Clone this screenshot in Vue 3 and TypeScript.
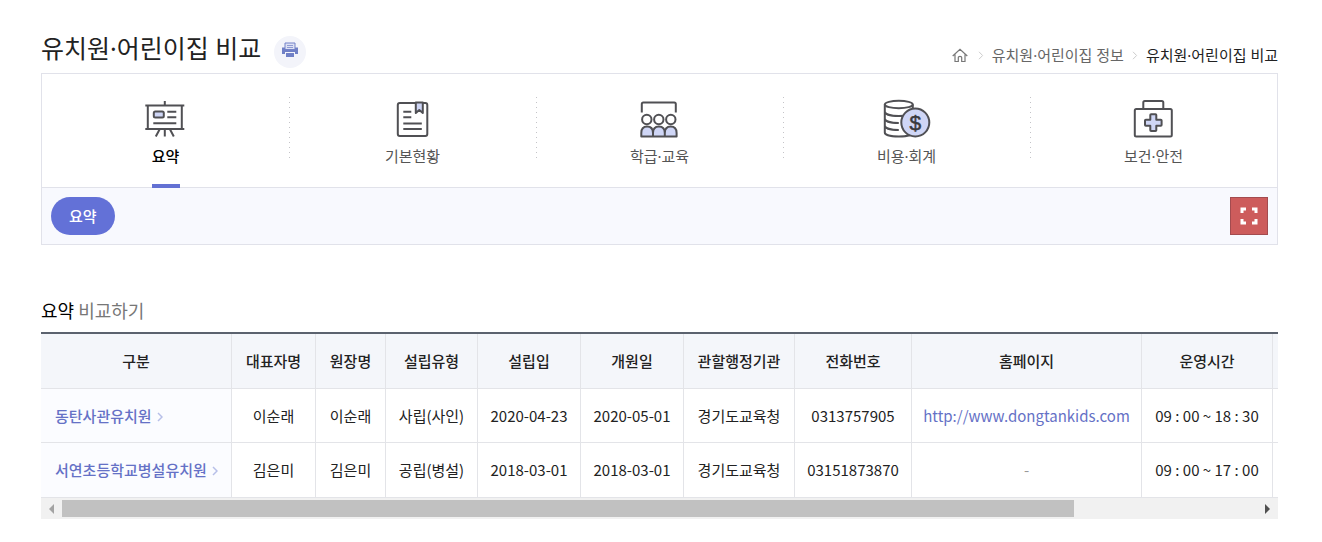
<script setup lang="ts">
import { computed, onBeforeUnmount, onMounted, ref } from 'vue'

type IconName = 'board' | 'note' | 'class' | 'cost' | 'health'

interface Tab {
  icon: IconName
  label: string
}

interface School {
  name: string
  owner: string
  director: string
  type: string
  founded: string
  opened: string
  office: string
  phone: string
  homepage: string
  hours: string
}

const tabs: Tab[] = [
  { icon: 'board', label: '요약' },
  { icon: 'note', label: '기본현황' },
  { icon: 'class', label: '학급·교육' },
  { icon: 'cost', label: '비용·회계' },
  { icon: 'health', label: '보건·안전' },
]

const columns = ['구분', '대표자명', '원장명', '설립유형', '설립입', '개원일', '관할행정기관', '전화번호', '홈페이지', '운영시간']

const schools: School[] = [
  {
    name: '동탄사관유치원', owner: '이순래', director: '이순래', type: '사립(사인)',
    founded: '2020-04-23', opened: '2020-05-01', office: '경기도교육청', phone: '0313757905',
    homepage: 'http://www.dongtankids.com', hours: '09 : 00 ~ 18 : 30',
  },
  {
    name: '서연초등학교병설유치원', owner: '김은미', director: '김은미', type: '공립(병설)',
    founded: '2018-03-01', opened: '2018-03-01', office: '경기도교육청', phone: '03151873870',
    homepage: '', hours: '09 : 00 ~ 17 : 00',
  },
]

const active = ref(0)
const scroller = ref<HTMLElement | null>(null)
const visible = ref(1)
const total = ref(1)
const offset = ref(0)

const thumbStyle = computed(() => ({
  width: `${(visible.value / total.value) * 100}%`,
  marginLeft: `${(offset.value / total.value) * 100}%`,
}))

function measure() {
  const el = scroller.value
  if (!el) return
  visible.value = el.clientWidth
  total.value = el.scrollWidth
  offset.value = el.scrollLeft
}

function scrollTable(step: number) {
  scroller.value?.scrollBy({ left: step })
}

function printPage() {
  window.print()
}

onMounted(() => {
  measure()
  window.addEventListener('resize', measure)
})
onBeforeUnmount(() => window.removeEventListener('resize', measure))
</script>

<template>
  <main class="page">
    <header class="head">
      <div class="head-title">
        <h1>유치원·어린이집 비교</h1>
        <button class="print" type="button" aria-label="인쇄" @click="printPage">
          <svg width="16" height="16" viewBox="0 0 16 16" aria-hidden="true">
            <path d="M0 5.500h16V12H0z" fill="#7080c6" />
            <path d="M3 1h10v6.500H3z" fill="#dde1f4" stroke="#7583c8" />
            <path d="M5 3.500h6M5 5.500h6" stroke="#8f9bd3" />
            <path d="M3 10h10v5H3z" fill="#f3f4fa" />
            <path d="M4 11h8v4H4z" fill="#7080c6" />
          </svg>
        </button>
      </div>
      <nav class="crumbs" aria-label="현재 위치">
        <a href="#" class="home" aria-label="홈">
          <svg width="16" height="15" viewBox="0 0 16 15" fill="none" stroke="#777" aria-hidden="true">
            <path d="M.7 8 8 1.2 15.3 8M3 6.5v7h3.3V9.6q0-1.2 1.7-1.2t1.7 1.2v3.9H13v-7" stroke-width="1.2" />
          </svg>
        </a>
        <svg class="sep" width="6" height="9" viewBox="0 0 6 9" aria-hidden="true"><path d="m1 .8 3.6 3.7L1 8.2" /></svg>
        <a href="#">유치원·어린이집 정보</a>
        <svg class="sep" width="6" height="9" viewBox="0 0 6 9" aria-hidden="true"><path d="m1 .8 3.6 3.7L1 8.2" /></svg>
        <a href="#" class="here" aria-current="page">유치원·어린이집 비교</a>
      </nav>
    </header>

    <section class="panel">
      <div class="tabs">
        <button
          v-for="(tab, i) in tabs"
          :key="tab.icon"
          type="button"
          class="tab"
          :class="{ on: active === i }"
          @click="active = i"
        >
          <svg class="icon" width="48" height="40" viewBox="0.7 0 48 40" aria-hidden="true">
            <g v-if="tab.icon === 'board'">
              <path d="M4 6.5h39M4 30h39M6.5 6.5V30M40.500 6.5V30M23.5 2v4M23.5 30v7.5M18.5 30l-4 7.5M28.5 30l4 7.5" />
              <rect class="tint" x="12.5" y="12.5" width="10" height="6" rx="1.5" />
              <path d="M26 12.8h9M26 18.3h9M12 24.3h23" />
            </g>
            <g v-else-if="tab.icon === 'note'">
              <rect x="9.5" y="4" width="29.5" height="33" rx="2" />
              <path class="tint" d="M27.5 3.5h7V14L31 11l-3.5 3z" />
              <path d="M15 12.7h8M15 18.2h8M15 24.4h18.5M15 30h18.5" />
            </g>
            <g v-else-if="tab.icon === 'class'">
              <path d="M6.5 13.5V5q0-1.500 1.5-1.500h31q1.500 0 1.500 1.500v8.500" />
              <path class="tint" d="M6 37.500V34q0-6.500 5.800-6.500t5.900 6.500v3.500zM17.700 37.500V34q0-6.500 5.900-6.500t5.900 6.500v3.500zM29.500 37.500V34q0-6.500 5.900-6.500t5.900 6.500v3.500z" />
              <circle class="blank" cx="11.5" cy="20.5" r="4.7" />
              <circle class="blank" cx="23.5" cy="20.5" r="4.7" />
              <circle class="blank" cx="35.5" cy="20.5" r="4.7" />
            </g>
            <g v-else-if="tab.icon === 'cost'">
              <ellipse cx="16.5" cy="5.5" rx="14" ry="3.7" />
              <path d="M2.5 5.5v28c0 2.300 6 4 14 4s14-1.700 14-4v-28M2.5 12.500c0 2.700 6 4.500 14 4.500s14-1.800 14-4.500M2.5 19.500c0 2.700 6 4.500 14 4.500M2.5 26.500c0 2.700 6 4.500 14 4.500" />
              <circle class="tint" cx="33" cy="23.5" r="14" />
              <text x="33" y="31" text-anchor="middle">$</text>
            </g>
            <g v-else>
              <path d="M14 10V3.5Q14 2 15.5 2h17Q34 2 34 3.5V10" />
              <rect x="5.5" y="10" width="37" height="27.5" rx="1.5" />
              <path class="tint" d="M21 16q0-.8.8-.8h4.400q.8 0 .8.800v4.800h4.500q.8 0 .8.800v4.400q0 .8-.8.800H27v4.500q0 .8-.8.800h-4.400q-.8 0-.8-.8v-4.500h-4.500q-.8 0-.8-.8v-4.400q0-.8.8-.8H21z" />
            </g>
          </svg>
          <span class="tab-label">{{ tab.label }}</span>
        </button>
      </div>
      <div class="subbar">
        <button type="button" class="pill">요약</button>
        <button type="button" class="expand" aria-label="전체화면">
          <svg width="18" height="18" viewBox="0 0 18 18" fill="none" stroke="#fff" stroke-width="3" aria-hidden="true">
            <path d="M2 6V2h4M12 2h4v4M16 12v4h-4M6 16H2v-4" />
          </svg>
        </button>
      </div>
    </section>

    <section>
      <h2>요약 <span>비교하기</span></h2>
      <div ref="scroller" class="scroller" @scroll="measure">
        <table>
          <colgroup>
            <col class="w-name"><col class="w-owner"><col class="w-director"><col class="w-type">
            <col class="w-date"><col class="w-date"><col class="w-office"><col class="w-phone">
            <col class="w-site"><col class="w-hours"><col class="w-rest">
          </colgroup>
          <thead>
            <tr>
              <th v-for="c in columns" :key="c" scope="col">{{ c }}</th>
              <td></td>
            </tr>
          </thead>
          <tbody>
            <tr v-for="s in schools" :key="s.name">
              <th scope="row">
                <a href="#">{{ s.name }}<svg width="6" height="10" viewBox="0 0 6 10" aria-hidden="true"><path d="m1 1 4 4-4 4" /></svg></a>
              </th>
              <td>{{ s.owner }}</td>
              <td>{{ s.director }}</td>
              <td>{{ s.type }}</td>
              <td>{{ s.founded }}</td>
              <td>{{ s.opened }}</td>
              <td>{{ s.office }}</td>
              <td>{{ s.phone }}</td>
              <td>
                <a v-if="s.homepage" :href="s.homepage">{{ s.homepage }}</a>
                <span v-else class="none">-</span>
              </td>
              <td>{{ s.hours }}</td>
              <td></td>
            </tr>
          </tbody>
        </table>
      </div>
      <div class="bar">
        <button type="button" aria-label="왼쪽으로" :disabled="offset <= 0" @click="scrollTable(-80)">
          <svg width="5" height="10" viewBox="0 0 5 10" aria-hidden="true"><path d="M5 0v10L0 5z" /></svg>
        </button>
        <div class="track"><div class="thumb" :style="thumbStyle"></div></div>
        <button type="button" aria-label="오른쪽으로" @click="scrollTable(80)">
          <svg width="5" height="10" viewBox="0 0 5 10" aria-hidden="true"><path d="M0 0v10l5-5z" /></svg>
        </button>
      </div>
    </section>
  </main>
</template>

<style>
body {
  margin: 0;
  background: #fff;
}
</style>

<style scoped>
.page {
  padding: 28px 44px 23px 41px;
  font-family: "Noto Sans CJK KR", "Noto Sans", sans-serif;
  font-size: 15px;
  line-height: 22px;
  color: #222;
}
button {
  padding: 0;
  border: 0;
  background: none;
  font: inherit;
  color: inherit;
  cursor: pointer;
}
a {
  color: inherit;
  text-decoration: none;
}
svg {
  display: block;
}
h1,
.crumbs,
.tab-label {
  font-family: "Noto Sans", "Noto Sans CJK KR", sans-serif;
}
.head {
  display: flex;
  justify-content: space-between;
  align-items: flex-end;
  padding-bottom: 5px;
}
.head-title {
  display: flex;
  align-items: flex-end;
  gap: 13px;
}
h1 {
  margin: 0;
  font-size: 25px;
  line-height: 40px;
  font-weight: 400;
}
.print {
  display: grid;
  place-items: center;
  width: 32px;
  height: 32px;
  border-radius: 50%;
  background: #f3f4fa;
}
.print svg {
  margin-bottom: 4px;
}
.crumbs {
  display: flex;
  align-items: center;
  gap: 8px;
  margin-bottom: 2px;
  color: #666;
}
.crumbs .here {
  color: #222;
}
.sep path {
  fill: none;
  stroke: #ccc;
}
.home + .sep {
  margin-left: 2px;
}
.panel {
  border: 1px solid #e1e2ea;
}
.tabs {
  display: grid;
  grid-template-columns: repeat(5, 1fr);
}
.tab {
  position: relative;
  display: flex;
  flex-direction: column;
  align-items: center;
  gap: 6px;
  padding: 25px 0 20px;
  color: #555;
}
.tab + .tab::before {
  content: "";
  position: absolute;
  left: 0;
  top: 23px;
  width: 1px;
  height: 64px;
  background: repeating-linear-gradient(#c4c4c8 0 1px, transparent 1px 5px);
}
.tab.on {
  color: #000;
  font-weight: 500;
}
.tab.on::after {
  content: "";
  position: absolute;
  bottom: -1px;
  width: 28px;
  height: 4px;
  background: #6371d3;
}
.icon {
  fill: none;
  stroke: #505054;
  stroke-width: 2;
  stroke-linejoin: round;
}
.icon .tint {
  fill: #cfd6f6;
}
.icon .blank {
  fill: #fff;
}
.icon text {
  fill: #39393d;
  stroke: #39393d;
  stroke-width: 0.5;
  font-family: "Liberation Sans", sans-serif;
  font-size: 21px;
}
.subbar {
  display: flex;
  justify-content: space-between;
  align-items: center;
  padding: 9px;
  border-top: 1px solid #e1e2ea;
  background: #f8f9fe;
}
.pill {
  height: 38px;
  padding: 0 18px;
  border-radius: 19px;
  background: #6371d7;
  color: #fff;
  font-weight: 500;
}
.expand {
  display: grid;
  place-items: center;
  width: 38px;
  height: 38px;
  border: 1px solid #a34b4f;
  background: #cd5c5c;
}
h2 {
  margin: 51px 0 8px;
  font-size: 18px;
  line-height: 28px;
  font-weight: 400;
  color: #000;
}
h2 span {
  color: #777;
}
.scroller {
  overflow-x: auto;
  border-top: 2px solid #5b626e;
  scrollbar-width: none;
}
table {
  width: 1460px;
  table-layout: fixed;
  border-collapse: separate;
  border-spacing: 0;
}
.w-name { width: 191px; }
.w-owner { width: 84px; }
.w-director { width: 70px; }
.w-type { width: 92px; }
.w-date { width: 103px; }
.w-office { width: 111px; }
.w-phone { width: 117px; }
.w-site { width: 230px; }
.w-hours { width: 131px; }
th,
td {
  box-sizing: border-box;
  height: 54px;
  padding: 0 4px;
  border-right: 1px solid #e3e4e8;
  border-bottom: 1px solid #e3e4e8;
  text-align: center;
  white-space: nowrap;
  font-weight: 400;
}
thead th,
thead td {
  height: 55px;
  background: #f4f6fa;
  font-weight: 500;
}
tbody tr:last-child > * {
  height: 55px;
}
tbody th {
  padding-left: 14px;
  background: #fbfcff;
  text-align: left;
  font-weight: 500;
}
tbody a {
  color: #6571c6;
}
th a {
  display: flex;
  align-items: center;
  gap: 5px;
}
th a svg {
  margin-top: 2px;
}
th a path {
  fill: none;
  stroke: #b7bfe8;
  stroke-width: 1.5;
}
.none {
  color: #999;
}
.bar {
  display: flex;
  align-items: stretch;
  height: 21px;
  background: #f1f1f1;
}
.bar button {
  display: grid;
  place-items: center;
  width: 21px;
  fill: #505050;
}
.bar button:disabled {
  fill: #a3a3a3;
}
.track {
  flex: 1;
  padding: 2px 0;
}
.thumb {
  height: 17px;
  background: #c1c1c1;
}
</style>
